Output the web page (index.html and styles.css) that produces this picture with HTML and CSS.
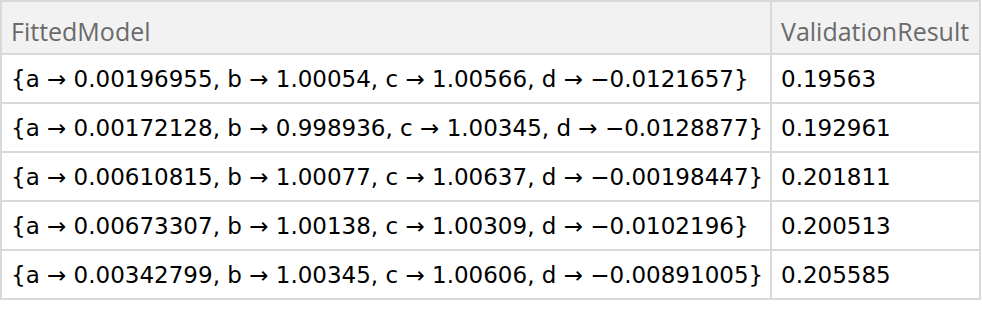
FILE: index.html
```html
<!DOCTYPE html>
<html>
<head>
<meta charset="utf-8">
<link rel="stylesheet" href="styles.css">
</head>
<body>
<div class="grid">
  <div class="cell head">FittedModel</div>
  <div class="cell head">ValidationResult</div>
  <div class="cell">{a → 0.00196955, b → 1.00054, c → 1.00566, d → −0.0121657}</div>
  <div class="cell">0.19563</div>
  <div class="cell">{a → 0.00172128, b → 0.998936, c → 1.00345, d → −0.0128877}</div>
  <div class="cell">0.192961</div>
  <div class="cell">{a → 0.00610815, b → 1.00077, c → 1.00637, d → −0.00198447}</div>
  <div class="cell">0.201811</div>
  <div class="cell">{a → 0.00673307, b → 1.00138, c → 1.00309, d → −0.0102196}</div>
  <div class="cell">0.200513</div>
  <div class="cell">{a → 0.00342799, b → 1.00345, c → 1.00606, d → −0.00891005}</div>
  <div class="cell">0.205585</div>
</div>
</body>
</html>
```
FILE: styles.css
```css
html, body {
  margin: 0;
  padding: 0;
  background: #ffffff;
}
.grid {
  display: grid;
  grid-template-columns: 768px 207px;
  grid-template-rows: 51px repeat(5, 47px);
  gap: 2px;
  padding: 2px;
  background: #d9d9d9;
  width: max-content;
}
.cell {
  background: #ffffff;
  display: flex;
  align-items: center;
  padding-left: 9px;
  font-family: "DejaVu Sans", sans-serif;
  font-size: 23px;
  color: #000000;
  white-space: nowrap;
  overflow: hidden;
}
.head {
  background: #f2f2f2;
  color: #6a6a6a;
  font-family: "Open Sans", sans-serif;
  font-size: 25px;
  padding-top: 7px;
}
```
